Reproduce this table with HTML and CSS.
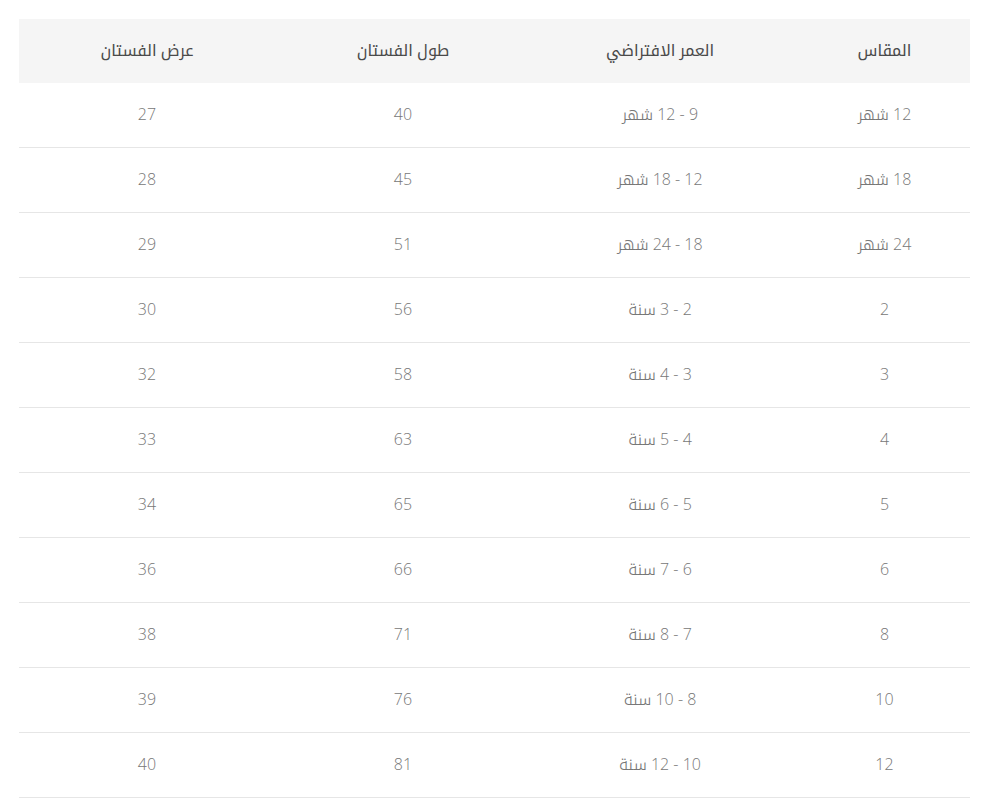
FILE: index.html
```html
<!DOCTYPE html>
<html lang="ar" dir="rtl">
<head>
<meta charset="utf-8">
<link rel="stylesheet" href="styles.css">
</head>
<body>
<div class="wrap">
<table class="size-table">
  <colgroup>
    <col class="c1"><col class="c2"><col class="c3"><col class="c4">
  </colgroup>
  <thead>
    <tr><th class="first">المقاس</th><th>العمر الافتراضي</th><th>طول الفستان</th><th>عرض الفستان</th></tr>
  </thead>
  <tbody>
    <tr><td class="first">12 شهر</td><td>9 - 12 شهر</td><td>40</td><td>27</td></tr>
    <tr><td class="first">18 شهر</td><td>12 - 18 شهر</td><td>45</td><td>28</td></tr>
    <tr><td class="first">24 شهر</td><td>18 - 24 شهر</td><td>51</td><td>29</td></tr>
    <tr><td class="first">2</td><td>2 - 3 سنة</td><td>56</td><td>30</td></tr>
    <tr><td class="first">3</td><td>3 - 4 سنة</td><td>58</td><td>32</td></tr>
    <tr><td class="first">4</td><td>4 - 5 سنة</td><td>63</td><td>33</td></tr>
    <tr><td class="first">5</td><td>5 - 6 سنة</td><td>65</td><td>34</td></tr>
    <tr><td class="first">6</td><td>6 - 7 سنة</td><td>66</td><td>36</td></tr>
    <tr><td class="first">8</td><td>7 - 8 سنة</td><td>71</td><td>38</td></tr>
    <tr><td class="first">10</td><td>8 - 10 سنة</td><td>76</td><td>39</td></tr>
    <tr><td class="first">12</td><td>10 - 12 سنة</td><td>81</td><td>40</td></tr>
  </tbody>
</table>
</div>
</body>
</html>
```
FILE: styles.css
```css
html, body {
  margin: 0;
  padding: 0;
  background: #ffffff;
}
body {
  font-family: "Open Sans", "Noto Kufi Arabic", "Noto Sans Arabic", "DejaVu Sans", sans-serif;
}
.wrap {
  padding: 19px 30px 0 19px;
}
.size-table {
  width: 951px;
  border-collapse: collapse;
  table-layout: fixed;
  direction: rtl;
}
.c1 { width: 181px; }
.c2 { width: 258px; }
.c3 { width: 256px; }
.c4 { width: 256px; }
.size-table th {
  height: 62px;
  padding: 0 0 2px 0;
  background: #f5f5f5;
  color: #4a4a4a;
  font-weight: normal;
  font-size: 16px;
  text-align: center;
  vertical-align: middle;
}
.size-table td {
  height: 62px;
  padding: 0 0 2px 0;
  color: #777777;
  font-size: 16px;
  font-weight: 300;
  text-align: center;
  vertical-align: middle;
  border-bottom: 1px solid #e6e6e6;
}
.size-table .first {
  padding-left: 10px;
}
```
